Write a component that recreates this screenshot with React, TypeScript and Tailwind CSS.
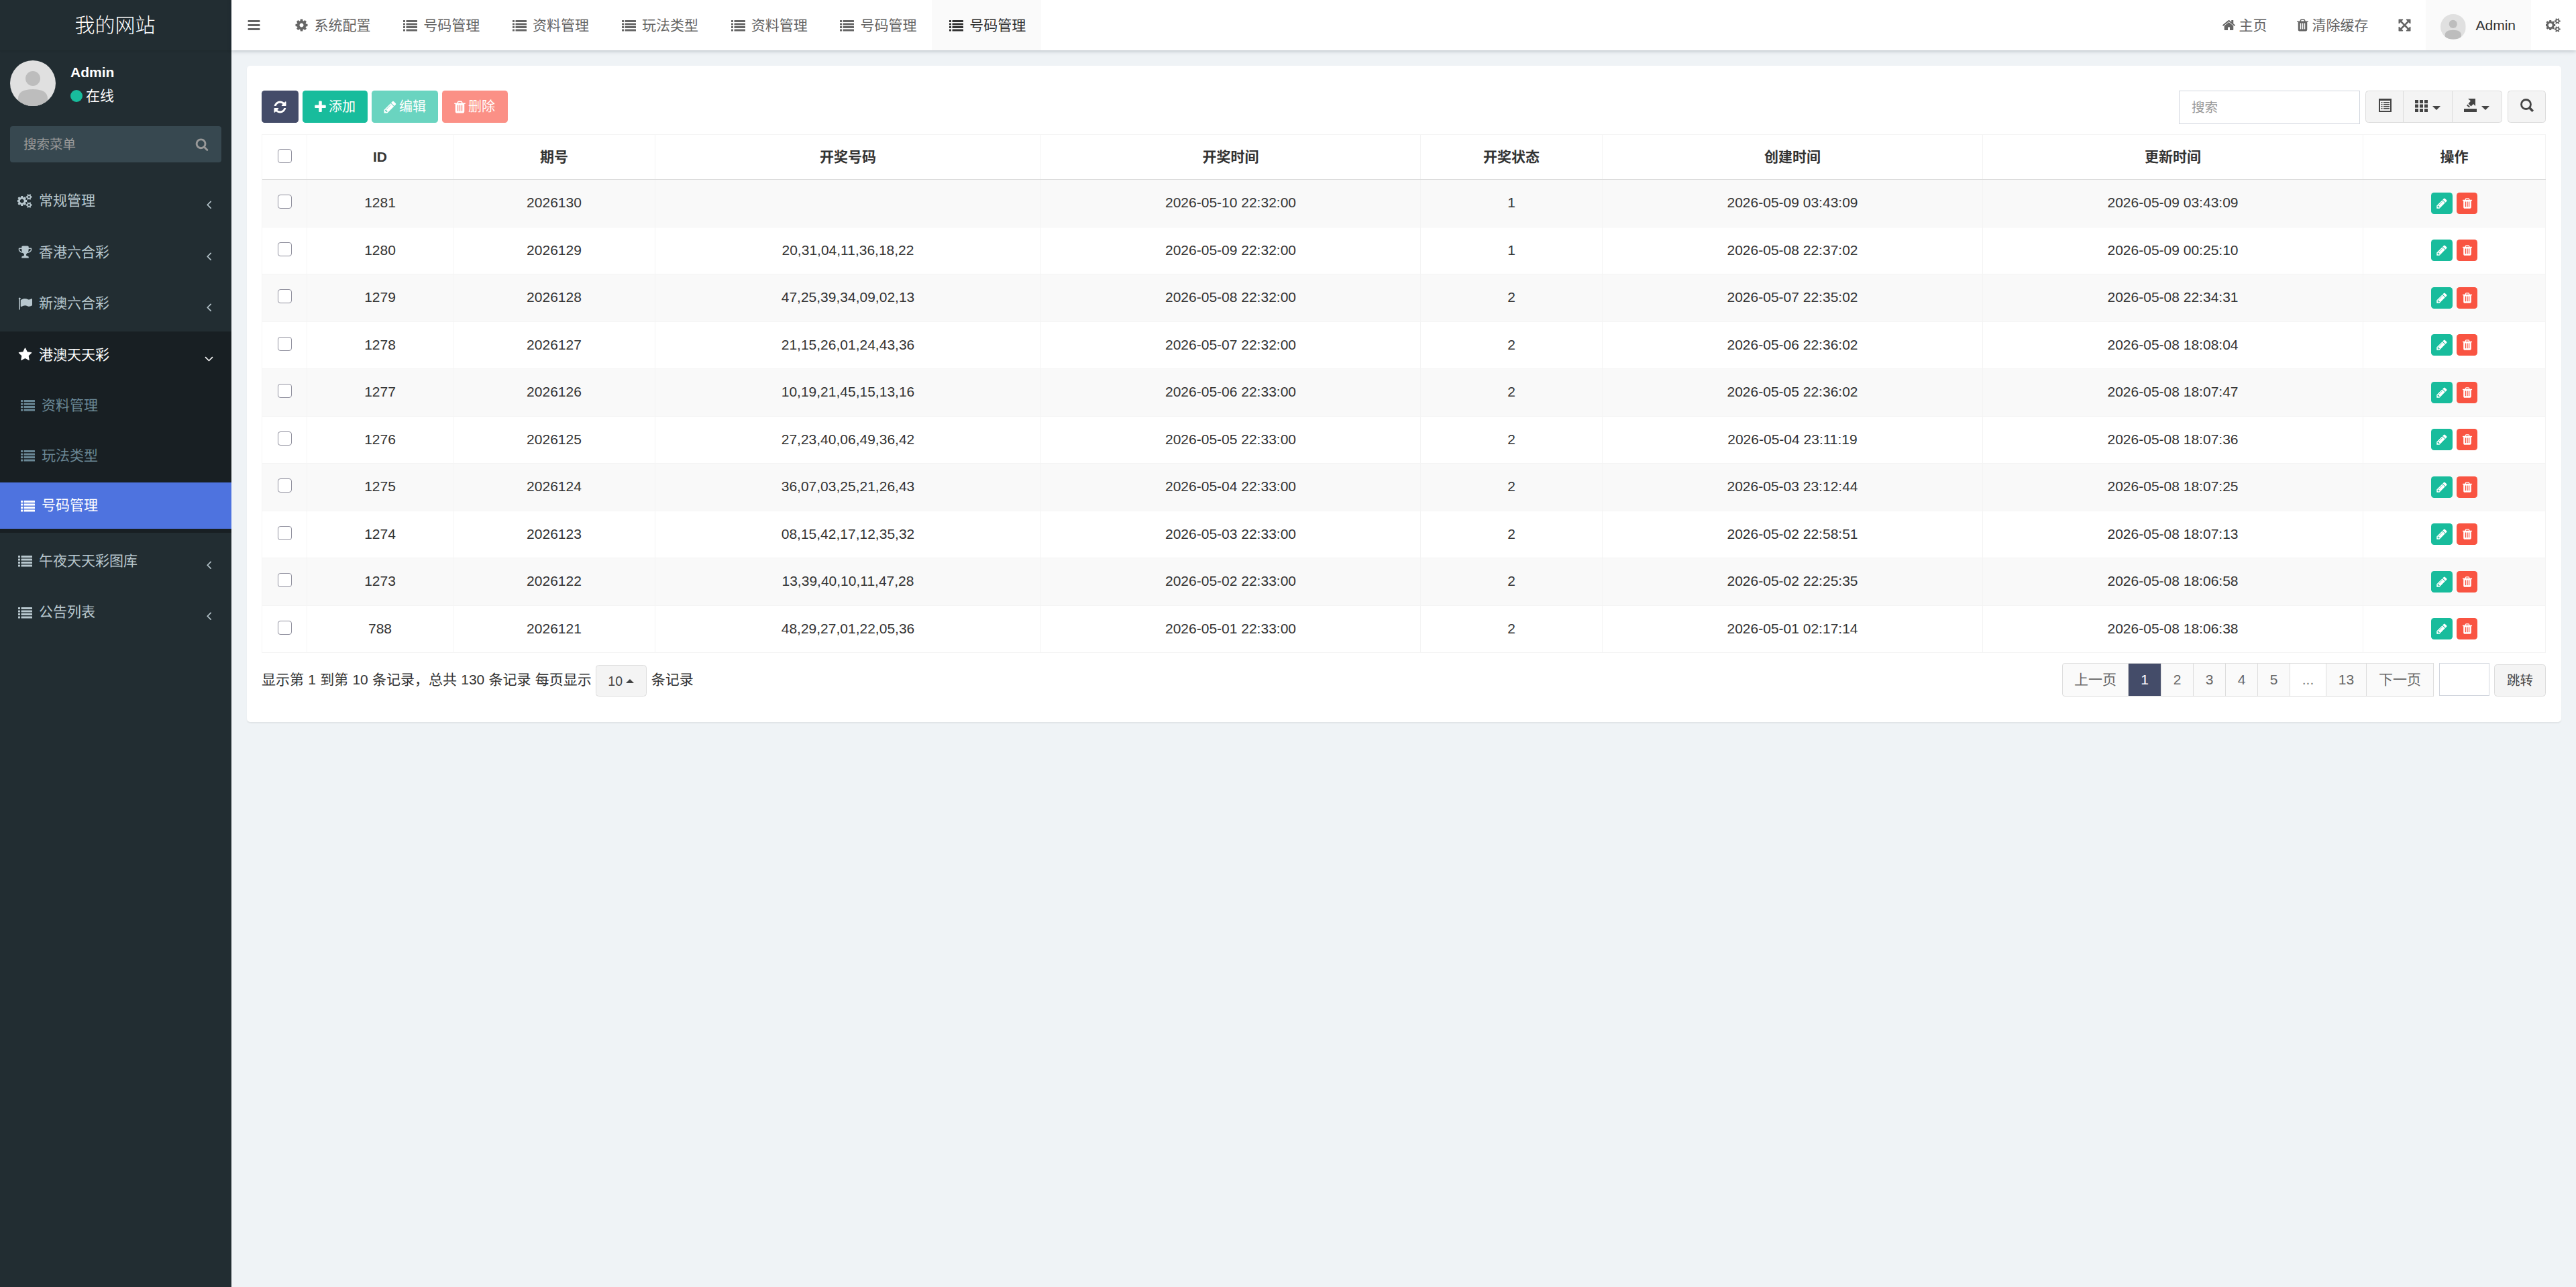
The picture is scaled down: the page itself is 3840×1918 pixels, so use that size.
import React from "react";

const PATHS: Record<string, [number, string]> = {
  list: [1792, "M32 256h192q32 0 32 32v192q0 32-32 32h-192q-32 0-32-32v-192q0-32 32-32zM32 640h192q32 0 32 32v192q0 32-32 32h-192q-32 0-32-32v-192q0-32 32-32zM32 1024h192q32 0 32 32v192q0 32-32 32h-192q-32 0-32-32v-192q0-32 32-32zM32 1408h192q32 0 32 32v192q0 32-32 32h-192q-32 0-32-32v-192q0-32 32-32zM416 256h1344q32 0 32 32v192q0 32-32 32h-1344q-32 0-32-32v-192q0-32 32-32zM416 640h1344q32 0 32 32v192q0 32-32 32h-1344q-32 0-32-32v-192q0-32 32-32zM416 1024h1344q32 0 32 32v192q0 32-32 32h-1344q-32 0-32-32v-192q0-32 32-32zM416 1408h1344q32 0 32 32v192q0 32-32 32h-1344q-32 0-32-32v-192q0-32 32-32z"],
  cog: [1792, "M1152 896q0-106-75-181t-181-75-181 75-75 181 75 181 181 75 181-75 75-181zm512-109v222q0 12-8 23t-20 13l-185 28q-19 54-39 91 35 50 107 138 10 12 10 25t-9 23q-27 37-99 108t-94 71q-12 0-26-9l-138-108q-44 23-91 38-16 136-29 186-7 28-36 28h-222q-14 0-24.5-8.5t-11.5-21.5l-28-184q-49-16-90-37l-141 107q-10 9-25 9-14 0-25-11-126-114-165-168-7-10-7-23 0-12 8-23 15-21 51-66.5t54-70.5q-27-50-41-99l-183-27q-13-2-21-12.5t-8-23.5v-222q0-12 8-23t19-13l186-28q14-46 39-92-40-57-107-138-10-12-10-24 0-10 9-23 26-36 98.5-107.5t94.5-71.5q13 0 26 10l138 107q44-23 91-38 16-136 29-186 7-28 36-28h222q14 0 24.5 8.5t11.5 21.5l28 184q49 16 90 37l142-107q9-9 24-9 13 0 25 10 129 119 165 170 7 8 7 22 0 12-8 23-15 21-51 66.5t-54 70.5q26 50 41 98l183 28q13 2 21 12.5t8 23.5z"],
  trash: [1792, "M704 1376v-704q0-14-9-23t-23-9h-64q-14 0-23 9t-9 23v704q0 14 9 23t23 9h64q14 0 23-9t9-23zm256 0v-704q0-14-9-23t-23-9h-64q-14 0-23 9t-9 23v704q0 14 9 23t23 9h64q14 0 23-9t9-23zm256 0v-704q0-14-9-23t-23-9h-64q-14 0-23 9t-9 23v704q0 14 9 23t23 9h64q14 0 23-9t9-23zm-544-992h448l-48-117q-7-9-17-11h-317q-10 2-17 11zm928 32v64q0 14-9 23t-23 9h-96v948q0 83-47 143.5t-113 60.5h-832q-66 0-113-58.5t-47-141.5v-952h-96q-14 0-23-9t-9-23v-64q0-14 9-23t23-9h309l70-167q15-37 54-63t79-26h320q40 0 79 26t54 63l70 167h309q14 0 23 9t9 23z"],
  pencil: [1792, "M491 1536l91-91-235-235-91 91v107h128v128h107zm523-928q0-22-22-22-10 0-17 7l-542 542q-7 7-7 17 0 22 22 22 10 0 17-7l542-542q7-7 7-17zm-54-192l416 416-832 832h-416v-416zm683 96q0 53-37 90l-166 166-416-416 166-165q36-38 90-38 53 0 91 38l235 234q37 39 37 91z"],
  plus: [1792, "M1600 736v192q0 40-28 68t-68 28h-416v416q0 40-28 68t-68 28h-192q-40 0-68-28t-28-68v-416h-416q-40 0-68-28t-28-68v-192q0-40 28-68t68-28h416v-416q0-40 28-68t68-28h192q40 0 68 28t28 68v416h416q40 0 68 28t28 68z"],
  refresh: [1792, "M1639 1056q0 5-1 7-64 268-268 434.5t-478 166.5q-146 0-282.5-55t-243.5-157l-129 129q-19 19-45 19t-45-19-19-45v-448q0-26 19-45t45-19h448q26 0 45 19t19 45-19 45l-137 137q71 66 161 102t187 36q134 0 250-65t186-179q11-17 53-117 8-23 30-23h192q13 0 22.5 9.5t9.5 22.5zm25-800v448q0 26-19 45t-45 19h-448q-26 0-45-19t-19-45 19-45l138-138q-148-137-349-137-134 0-250 65t-186 179q-11 17-53 117-8 23-30 23h-199q-13 0-22.5-9.5t-9.5-22.5v-7q65-268 270-434.5t480-166.5q146 0 284 55.5t245 156.5l130-129q19-19 45-19t45 19 19 45z"],
  search: [1792, "M1216 832q0-185-131.5-316.5t-316.5-131.5-316.5 131.5-131.5 316.5 131.5 316.5 316.5 131.5 316.5-131.5 131.5-316.5zm512 832q0 52-38 90t-90 38q-54 0-90-38l-343-342q-179 124-399 124-143 0-273.5-55.5t-225-150-150-225-55.5-273.5 55.5-273.5 150-225 225-150 273.5-55.5 273.5 55.5 225 150 150 225 55.5 273.5q0 220-124 399l343 343q37 37 37 90z"],
  home: [1792, "M1472 992v480q0 26-19 45t-45 19h-384v-384h-256v384h-384q-26 0-45-19t-19-45v-480q0-1 .5-3t.5-3l575-474 575 474q1 2 1 6zm223-69l-62 74q-8 9-21 11h-3q-13 0-21-7l-692-577-692 577q-12 8-24 7-13-2-21-11l-62-74q-8-10-7-23.5t11-21.5l719-599q32-26 76-26t76 26l244 204v-195q0-14 9-23t23-9h192q14 0 23 9t9 23v408l219 182q10 8 11 21.5t-7 23.5z"],
  star: [1792, "M1728 647q0 22-26 48l-363 354 86 500q1 7 1 20 0 21-10.5 35.5t-30.5 14.5q-19 0-40-12l-449-236-449 236q-22 12-40 12-21 0-31.5-14.5t-10.5-35.5q0-6 2-20l86-500-364-354q-25-27-25-48 0-37 56-46l502-73 225-455q19-41 49-41t49 41l225 455 502 73q56 9 56 46z"],
  bars: [1792, "M192 256h1408q64 0 64 64v128q0 64-64 64h-1408q-64 0-64-64v-128q0-64 64-64zM192 768h1408q64 0 64 64v128q0 64-64 64h-1408q-64 0-64-64v-128q0-64 64-64zM192 1280h1408q64 0 64 64v128q0 64-64 64h-1408q-64 0-64-64v-128q0-64 64-64z"],
  cogs: [1920, "M832 896q0-106-75-181t-181-75-181 75-75 181 75 181 181 75 181-75 75-181zm768 512q0-52-38-90t-90-38-90 38-38 90q0 53 37.5 90.5t90.5 37.5 90.5-37.5 37.5-90.5zm0-1024q0-52-38-90t-90-38-90 38-38 90q0 53 37.5 90.5t90.5 37.5 90.5-37.5 37.5-90.5zm-384 421v185q0 10-7 19.5t-16 10.5l-155 24q-11 35-32 76 34 48 90 115 7 11 7 20 0 12-7 19-23 30-82.5 89.5t-78.5 59.5q-11 0-21-7l-115-90q-37 19-77 31-11 108-23 155-7 24-30 24h-186q-11 0-20-7.5t-10-17.5l-23-153q-34-10-75-31l-118 89q-7 7-20 7-11 0-21-8-144-133-144-160 0-9 7-19 10-14 41-53t47-61q-23-44-35-82l-152-24q-10-1-17-9.5t-7-19.5v-185q0-10 7-19.5t16-10.5l155-24q11-35 32-76-34-48-90-115-7-11-7-20 0-12 7-20 22-30 82-89t79-59q11 0 21 7l115 90q34-18 77-32 11-108 23-154 7-24 30-24h186q11 0 20 7.5t10 17.5l23 153q34 10 75 31l118-89q8-7 20-7 11 0 21 8 144 133 144 160 0 8-7 19-12 16-42 54t-45 60q23 48 34 82l152 23q10 2 17 10.5t7 19.5zm640 533v140q0 16-149 31-12 27-30 52 51 113 51 138 0 4-4 7-122 71-124 71-8 0-46-47t-52-68q-20 2-30 2t-30-2q-14 21-52 68t-46 47q-2 0-124-71-4-3-4-7 0-25 51-138-18-25-30-52-149-15-149-31v-140q0-16 149-31 13-29 30-52-51-113-51-138 0-4 4-7 4-2 35-20t59-34 30-16q8 0 46 46.5t52 67.5q20-2 30-2t30 2q51-71 92-112l6-2q4 0 124 70 4 3 4 7 0 25-51 138 17 23 30 52 149 15 149 31zm0-1024v140q0 16-149 31-12 27-30 52 51 113 51 138 0 4-4 7-122 71-124 71-8 0-46-47t-52-68q-20 2-30 2t-30-2q-14 21-52 68t-46 47q-2 0-124-71-4-3-4-7 0-25 51-138-18-25-30-52-149-15-149-31v-140q0-16 149-31 13-29 30-52-51-113-51-138 0-4 4-7 4-2 35-20t59-34 30-16q8 0 46 46.5t52 67.5q20-2 30-2t30 2q51-71 92-112l6-2q4 0 124 70 4 3 4 7 0 25-51 138 17 23 30 52 149 15 149 31z"],
  trophy: [1792, "M522 883q-74-162-74-371h-256v96q0 78 94.5 162t235.5 113zm1078-275v-96h-256q0 209-74 371 141-29 235.5-113t94.5-162zm128-128v128q0 71-41.5 143t-112 130-173 97.5-215.5 44.5q-42 54-95 95-38 34-52.5 72.5t-14.5 89.5q0 54 30.5 91t97.5 37q75 0 133.5 45.5t58.5 114.5v64q0 14-9 23t-23 9h-832q-14 0-23-9t-9-23v-64q0-69 58.5-114.5t133.5-45.5q67 0 97.5-37t30.5-91q0-51-14.5-89.5t-52.5-72.5q-53-41-95-95-113-5-215.5-44.5t-173-97.5-112-130-41.5-143v-128q0-40 28-68t68-28h288v-96q0-66 47-113t113-47h576q66 0 113 47t47 113v96h288q40 0 68 28t28 68z"],
  flag: [1792, "M320 256q0 72-64 110v1266q0 13-9.5 22.5t-22.5 9.5h-64q-13 0-22.5-9.5t-9.5-22.5v-1266q-64-38-64-110 0-53 37.5-90.5t90.5-37.5 90.5 37.5 37.5 90.5zm1472 64v763q0 25-12.5 38.5t-39.5 27.5q-215 116-369 116-61 0-123.5-22t-108.5-48-115.5-48-142.5-22q-192 0-464 146-17 9-33 9-26 0-45-19t-19-45v-742q0-32 31-55 21-14 79-43 236-120 421-120 107 0 200 29t219 88q38 19 88 19 54 0 117.5-21t110-47 88-47 54.5-21q26 0 45 19t19 45z"],
  expand: [1792, "M1411 541l-355 355 355 355 144-144q29-31 70-14 39 17 39 59v448q0 26-19 45t-45 19h-448q-42 0-59-40-17-39 14-69l144-144-355-355-355 355 144 144q31 30 14 69-17 40-59 40h-448q-26 0-45-19t-19-45v-448q0-42 40-59 39-17 69 14l144 144 355-355-355-355-144 144q-19 19-45 19-12 0-24-5-40-17-40-59v-448q0-26 19-45t45-19h448q42 0 59 40 17 39-14 69l-144 144 355 355 355-355-144-144q-31-30-14-69 17-40 59-40h448q26 0 45 19t19 45v448q0 42-39 59-13 5-25 5-26 0-45-19z"],
  left: [1792, "M1203 544q0 13-10 23l-393 393 393 393q10 10 10 23t-10 23l-50 50q-10 10-23 10t-23-10l-466-466q-10-10-10-23t10-23l466-466q10-10 23-10t23 10l50 50q10 10 10 23z"],
  down: [1792, "M1395 736q0 13-10 23l-466 466q-10 10-23 10t-23-10l-466-466q-10-10-10-23t10-23l50-50q10-10 23-10t23 10l393 393 393-393q10-10 23-10t23 10l50 50q10 10 10 23z"],
};

function Icon({ name, className = "h-[21px]" }: { name: string; className?: string }) {
  const [w, d] = PATHS[name];
  return (
    <svg viewBox={`0 0 ${w} 1792`} fill="currentColor" className={`shrink-0 ${className}`}>
      <path d={d} />
    </svg>
  );
}

function Avatar({ className }: { className: string }) {
  return (
    <svg viewBox="0 0 68 68" className={`shrink-0 rounded-full ${className}`}>
      <rect width="68" height="68" fill="#e0e0e0" />
      <circle cx="34" cy="27" r="11" fill="#bdbdbd" />
      <path d="M12 68V57Q12 43 34 43Q56 43 56 57V68z" fill="#bdbdbd" />
    </svg>
  );
}

function MenuItem({ icon, label, open }: { icon: string; label: string; open?: boolean }) {
  return (
    <div className={`flex h-[70px] items-center pr-[23px] pl-[24px] ${open ? "text-white" : ""}`}>
      <span className="flex w-[27px] justify-center">
        <Icon name={icon} />
      </span>
      <span className="ml-[7px] flex-1">{label}</span>
      <Icon name={open ? "down" : "left"} className="mt-[11px] h-[21px]" />
    </div>
  );
}

function SubItem({ label, active }: { label: string; active?: boolean }) {
  return (
    <div className={`flex h-[69px] items-center pl-[28px] ${active ? "bg-[#4e73df] text-white" : "text-[#6a8896]"}`}>
      <span className="flex w-[27px] justify-center">
        <Icon name="list" />
      </span>
      <span className="ml-[7px]">{label}</span>
    </div>
  );
}

const TABS: [string, string][] = [
  ["cog", "系统配置"],
  ["list", "号码管理"],
  ["list", "资料管理"],
  ["list", "玩法类型"],
  ["list", "资料管理"],
  ["list", "号码管理"],
  ["list", "号码管理"],
];

const HEAD = ["ID", "期号", "开奖号码", "开奖时间", "开奖状态", "创建时间", "更新时间"];

const ROWS = [
  ["1281", "2026130", "", "2026-05-10 22:32:00", "1", "2026-05-09 03:43:09", "2026-05-09 03:43:09"],
  ["1280", "2026129", "20,31,04,11,36,18,22", "2026-05-09 22:32:00", "1", "2026-05-08 22:37:02", "2026-05-09 00:25:10"],
  ["1279", "2026128", "47,25,39,34,09,02,13", "2026-05-08 22:32:00", "2", "2026-05-07 22:35:02", "2026-05-08 22:34:31"],
  ["1278", "2026127", "21,15,26,01,24,43,36", "2026-05-07 22:32:00", "2", "2026-05-06 22:36:02", "2026-05-08 18:08:04"],
  ["1277", "2026126", "10,19,21,45,15,13,16", "2026-05-06 22:33:00", "2", "2026-05-05 22:36:02", "2026-05-08 18:07:47"],
  ["1276", "2026125", "27,23,40,06,49,36,42", "2026-05-05 22:33:00", "2", "2026-05-04 23:11:19", "2026-05-08 18:07:36"],
  ["1275", "2026124", "36,07,03,25,21,26,43", "2026-05-04 22:33:00", "2", "2026-05-03 23:12:44", "2026-05-08 18:07:25"],
  ["1274", "2026123", "08,15,42,17,12,35,32", "2026-05-03 22:33:00", "2", "2026-05-02 22:58:51", "2026-05-08 18:07:13"],
  ["1273", "2026122", "13,39,40,10,11,47,28", "2026-05-02 22:33:00", "2", "2026-05-02 22:25:35", "2026-05-08 18:06:58"],
  ["788", "2026121", "48,29,27,01,22,05,36", "2026-05-01 22:33:00", "2", "2026-05-01 02:17:14", "2026-05-08 18:06:38"],
];

const GRID = "grid grid-cols-[67px_218px_301px_575px_566px_271px_567px_567px_1fr]";

function Check() {
  return <span className="mb-[4px] size-[21px] rounded-[4px] border border-[#8f8f9d] bg-white" />;
}

function Cell({ children, className = "" }: { children?: React.ReactNode; className?: string }) {
  return (
    <div className={`flex items-center justify-center border-r border-[#f4f4f4] ${className}`}>{children}</div>
  );
}

function Caret({ up }: { up?: boolean }) {
  return (
    <svg viewBox="0 0 12 6" className="h-[6px] w-[12px] shrink-0" fill="currentColor">
      <path d={up ? "M0 6L6 0L12 6z" : "M0 0L6 6L12 0z"} />
    </svg>
  );
}

const PAGES: [string, string][] = [
  ["上一页", "w-[99px] rounded-l-[4px] border-l bg-[#fafafa] text-[#666]"],
  ["1", "w-[49px] border-[#444c69] bg-[#444c69] text-white"],
  ["2", "w-[48px] bg-[#fafafa] text-[#666]"],
  ["3", "w-[48px] bg-[#fafafa] text-[#666]"],
  ["4", "w-[48px] bg-[#fafafa] text-[#666]"],
  ["5", "w-[48px] bg-[#fafafa] text-[#666]"],
  ["...", "w-[54px] bg-white text-[#777]"],
  ["13", "w-[60px] bg-[#fafafa] text-[#666]"],
  ["下一页", "w-[100px] bg-[#fafafa] text-[#666]"],
];

export default function App() {
  return (
    <div className="flex h-[1918px] w-[3840px] overflow-hidden bg-[#eff3f6] font-['Liberation_Sans','Noto_Sans_CJK_SC',sans-serif] text-[21px] leading-[30px] whitespace-nowrap text-[#333]">
      <aside className="flex w-[345px] shrink-0 flex-col bg-[#222d32] text-[#b8c7ce]">
        <div className="flex h-[75px] items-center justify-center pr-[2px] text-[30px] font-light text-white shadow-[0_1px_3px_rgba(0,0,0,0.1)]">
          我的网站
        </div>
        <div className="flex h-[113px] items-start px-[15px] pt-[15px] text-white">
          <Avatar className="size-[68px]" />
          <div className="ml-[22px] flex flex-col">
            <span className="mt-[3px] font-bold">Admin</span>
            <span className="mt-[5px] flex items-center">
              <span className="mr-[5px] size-[18px] rounded-full bg-[#18bc9c]" />
              在线
            </span>
          </div>
        </div>
        <div className="mx-[15px] flex h-[54px] items-center justify-between rounded-[4px] bg-[#374850] pr-[19px] pl-[20px] text-[19.5px] text-[#999]">
          <span>搜索菜单</span>
          <Icon name="search" className="h-[20px]" />
        </div>
        <div className="mt-[22px] flex flex-col gap-[6.5px]">
          <MenuItem icon="cogs" label="常规管理" />
          <MenuItem icon="trophy" label="香港六合彩" />
          <MenuItem icon="flag" label="新澳六合彩" />
          <div className="flex flex-col gap-[5.8px] bg-[#181f23] pb-[6.6px]">
            <MenuItem icon="star" label="港澳天天彩" open />
            <SubItem label="资料管理" />
            <SubItem label="玩法类型" />
            <SubItem label="号码管理" active />
          </div>
          <MenuItem icon="list" label="午夜天天彩图库" />
          <MenuItem icon="list" label="公告列表" />
        </div>
      </aside>

      <div className="flex min-w-0 flex-1 flex-col">
        <header className="relative flex h-[75px] shrink-0 bg-white text-[#666] shadow-[0_1px_6px_rgba(0,21,41,0.25)]">
          <div className="flex w-[67.5px] items-center pl-[22.5px]">
            <Icon name="bars" />
          </div>
          {TABS.map(([icon, label], i) => (
            <div
              key={i}
              className={`flex w-[162.8px] items-center pl-[23px] ${i === 6 ? "bg-[#fafafa] text-[#333]" : ""}`}
            >
              <span className="flex w-[27px] justify-center">
                <Icon name={icon} />
              </span>
              <span className="ml-[6px]">{label}</span>
            </div>
          ))}
          <div className="ml-auto flex">
            <div className="flex items-center">
              <Icon name="home" />
              <span className="ml-[5px]">主页</span>
            </div>
            <div className="ml-[42px] flex items-center">
              <Icon name="trash" />
              <span className="ml-[4px]">清除缓存</span>
            </div>
            <div className="ml-[43px] flex items-center">
              <Icon name="expand" />
            </div>
            <div className="ml-[21px] flex w-[157.5px] items-center bg-[#fafafa] pl-[22.5px] text-[#333]">
              <Avatar className="mt-[5px] size-[37.5px]" />
              <span className="ml-[15px]">Admin</span>
            </div>
            <div className="flex w-[67px] items-center pl-[22px]">
              <Icon name="cogs" />
            </div>
          </div>
        </header>

        <main className="mx-[22.5px] mt-[23px] flex h-[978px] flex-col rounded-[5px] bg-white px-[22.5px] pt-[37px] shadow-[0_1.5px_1.5px_rgba(0,0,0,0.06)]">
          <div className="flex h-[65px] items-start text-[19.5px]">
            <div className="flex gap-[6px] text-white">
              <span className="flex h-[48px] w-[55px] items-center justify-center rounded-[4.5px] bg-[#444c69]">
                <Icon name="refresh" />
              </span>
              <span className="flex h-[48px] w-[97px] items-center rounded-[4.5px] bg-[#18bc9c] pl-[16px]">
                <Icon name="plus" />
                <span className="ml-[2px] text-[20px]">添加</span>
              </span>
              <span className="flex h-[48px] w-[99px] items-center rounded-[4.5px] bg-[#6ad4c0] pl-[17px]">
                <Icon name="pencil" />
                <span className="ml-[3px] text-[20px]">编辑</span>
              </span>
              <span className="flex h-[48px] w-[98px] items-center rounded-[4.5px] bg-[#fb9086] pl-[16px]">
                <Icon name="trash" />
                <span className="ml-[2px] text-[20px]">删除</span>
              </span>
            </div>
            <div className="ml-auto flex text-[#444]">
              <div className="mr-[8px] flex h-[50px] w-[270px] items-center border border-[#d2d6de] pl-[18px] text-[#999]">搜索</div>
              <div className="flex h-[48px] rounded-[4.5px] border border-[#ddd] bg-[#f4f4f4]">
                <span className="flex w-[56px] justify-center border-r border-[#ddd] pt-[11px] pl-[2px]">
                  <svg viewBox="0 0 19 20" className="h-[20px] w-[19px]" fill="currentColor">
                    <path fillRule="evenodd" d="M0 0h19v20H0zM2 3v15h15V3zM3.5 5h2v1.5h-2zM7 5h9v1.5H7zM3.5 8h2v1.5h-2zM7 8h9v1.5H7zM3.5 11h2v1.5h-2zM7 11h9v1.5H7zM3.5 14h2v1.5h-2zM7 14h9v1.5H7z" />
                  </svg>
                </span>
                <span className="flex w-[73px] border-r border-[#ddd] pt-[13px] pl-[17px]">
                  <svg viewBox="0 0 19 18" className="h-[18px] w-[19px]" fill="currentColor">
                    <path d="M0 0h5v5H0zM7 0h5v5H7zM14 0h5v5h-5zM0 6.5h5v5H0zM7 6.5h5v5H7zM14 6.5h5v5h-5zM0 13h5v5H0zM7 13h5v5H7zM14 13h5v5h-5z" />
                  </svg>
                  <span className="mt-[9px] ml-[7px] flex"><Caret /></span>
                </span>
                <span className="flex w-[73px] pt-[11px] pl-[17px]">
                  <svg viewBox="0 0 19 20" className="h-[20px] w-[19px]" fill="currentColor">
                    <path d="M0 15h19v5H0zM6 0h11v11l-3-3-3.500 3.500-4-4L10 3.500zM5.500 8.500l3.500 3.500-1.200 1.200-3.800-2.900z" />
                  </svg>
                  <span className="mt-[11px] ml-[7px] flex"><Caret /></span>
                </span>
              </div>
              <span className="ml-[8px] flex h-[48px] w-[57px] justify-center rounded-[4.5px] border border-[#ddd] bg-[#f4f4f4] pt-[11px]">
                <svg viewBox="0 0 20 20" className="size-[20px]" fill="none" stroke="currentColor">
                  <circle cx="8.500" cy="8.500" r="7" strokeWidth="2.800" />
                  <path d="M13.500 13.500L18.800 18.800" strokeWidth="3.500" />
                </svg>
              </span>
            </div>
          </div>

          <div className="flex flex-col border-t border-l border-[#f4f4f4]">
            <div className={`${GRID} h-[67px] border-b border-[#ddd] font-bold`}>
              <Cell><Check /></Cell>
              {HEAD.map((h) => (
                <Cell key={h}>{h}</Cell>
              ))}
              <Cell>操作</Cell>
            </div>
            {ROWS.map((r, i) => (
              <div key={i} className={`${GRID} h-[70.5px] border-b border-[#f4f4f4] ${i % 2 ? "" : "bg-[#f9f9f9]"}`}>
                <Cell><Check /></Cell>
                {r.map((c, j) => (
                  <Cell key={j} className="pb-[1px]">{c}</Cell>
                ))}
                <Cell className="gap-[6px]">
                  <span className="flex h-[32px] w-[32px] items-center justify-center rounded-[4.5px] bg-[#18bc9c] text-white">
                    <Icon name="pencil" className="h-[18px]" />
                  </span>
                  <span className="flex h-[32px] w-[31px] items-center justify-center rounded-[4.5px] bg-[#f95442] text-white">
                    <Icon name="trash" className="h-[18px]" />
                  </span>
                </Cell>
              </div>
            ))}
          </div>

          <div className="mt-[15px] flex h-[50px] items-center">
            <span className="[word-spacing:0.4px]">显示第 1 到第 10 条记录，总共 130 条记录 每页显示</span>
            <span className="mt-[3px] ml-[6px] flex h-[47px] w-[76px] items-center justify-center gap-[5px] rounded-[4.5px] border border-[#ddd] bg-[#f4f4f4] text-[19.5px] text-[#444]">
              10 <Caret up />
            </span>
            <span className="ml-[7px]">条记录</span>
            <div className="ml-auto flex h-[50px]">
              {PAGES.map(([label, cls]) => (
                <span key={label} className={`flex items-center justify-center border-y border-r border-[#ddd] ${cls}`}>
                  {label}
                </span>
              ))}
              <span className="ml-[8px] h-[49px] w-[75px] border border-[#d2d6de]" />
              <span className="mt-[2px] ml-[7px] flex h-[48px] w-[77px] items-center justify-center rounded-[4.5px] border border-[#ddd] bg-[#f4f4f4] text-[19.5px] text-[#444]">
                跳转
              </span>
            </div>
          </div>
        </main>
      </div>
    </div>
  );
}
